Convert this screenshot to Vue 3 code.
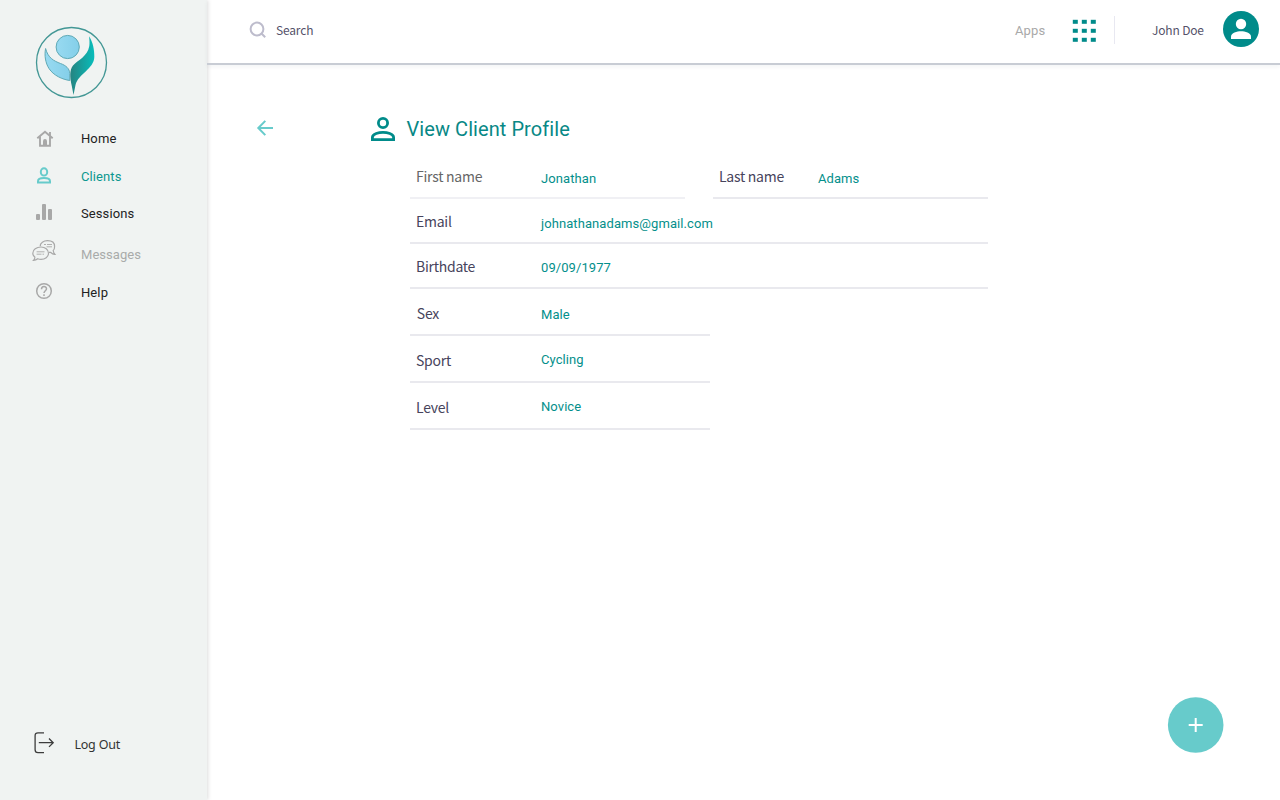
<script setup>
const nav = [
  { id: 'home', label: 'Home' },
  { id: 'clients', label: 'Clients' },
  { id: 'sessions', label: 'Sessions' },
  { id: 'messages', label: 'Messages' },
  { id: 'help', label: 'Help' }
]
const rows = [
  { id: 'email', label: 'Email', value: 'johnathanadams@gmail.com' },
  { id: 'birthdate', label: 'Birthdate', value: '09/09/1977' },
  { id: 'sex', label: 'Sex', value: 'Male' },
  { id: 'sport', label: 'Sport', value: 'Cycling' },
  { id: 'level', label: 'Level', value: 'Novice' }
]
</script>

<template>
  <div class="app">
    <aside class="sidebar">
      <svg class="logo" viewBox="0 0 72 72">
        <defs>
          <linearGradient id="leaf" x1="0" x2="1" y1="0" y2="0">
            <stop offset="0" stop-color="#258481" />
            <stop offset="1" stop-color="#08bdbb" />
          </linearGradient>
          <linearGradient id="sky" x1="0" x2="1" y1="0" y2="0">
            <stop offset="0" stop-color="#98daf1" />
            <stop offset="1" stop-color="#84cfe9" />
          </linearGradient>
        </defs>
        <circle cx="36.500" cy="36.500" r="35" fill="none" stroke="#439795" stroke-width="1.300" />
        <circle cx="32.700" cy="21" r="11.600" fill="url(#sky)" stroke="#5fa9b5" stroke-width="1" />
        <path d="M10.600 22.500C13 32 19 35 25.500 37.500C31 39.500 34.500 42.500 34.800 47.500V54.500C27.500 53.500 18.500 49.500 14 42.500C10.500 37 9.200 29.500 10.600 22.500Z" fill="url(#sky)" stroke="#5fa9b5" stroke-width="1" />
        <path d="M54 10.200C58 16 59.500 24 59.300 31C59 43 43 48 40.500 59L38.500 69L36.800 60C34.800 51 34.500 44 38 39.500C43 34 52.500 30.500 54.300 20C54.700 17 54.500 13.500 54 10.200Z" fill="url(#leaf)" />
      </svg>

      <nav class="nav">
        <a v-for="n in nav" :key="n.id" class="item" :class="n.id">
          <svg v-if="n.id === 'home'" class="icon" viewBox="0 0 24 24" fill="none" stroke="#a8a8a8" stroke-width="1.900">
            <path d="M4.300 11.300L12 4.700L19.700 11.300M7 9.800V18.700H17V9.800M17 8.500V5" />
            <path d="M10 18.700V14.300Q10 12 12 12T14 14.300V18.700Z" fill="#a8a8a8" stroke="none" />
          </svg>
          <svg v-else-if="n.id === 'clients'" class="icon" viewBox="0 0 24 24" fill="none" stroke="#67cbcb" stroke-width="2">
            <ellipse cx="11" cy="6.900" rx="3.200" ry="3.700" />
            <path d="M5 17.500V16.300C5 13.700 8.500 13.100 11 13.100S17 13.700 17 16.300V17.500Z" />
          </svg>
          <svg v-else-if="n.id === 'sessions'" class="icon" viewBox="0 0 24 24" fill="#a8a8a8">
            <rect x="3" y="12" width="4" height="6" rx="1" /><rect x="9" y="2" width="4" height="16" rx="1" /><rect x="15" y="7" width="4" height="11" rx="1" />
          </svg>
          <svg v-else-if="n.id === 'messages'" class="icon" viewBox="0 0 24 24" fill="none" stroke="#a9a9a9" stroke-width="1.200">
            <path d="M8.200 7.300C8.200 3.800 11.500 1.700 15.500 1.700C20 1.700 22.600 4 22.600 7.500C22.600 9.500 22 11 21.200 11.500C21.400 13.200 22.200 14.500 23 15.300C21.500 15.500 20 14.700 18.500 13.300H17" />
            <path d="M9 8C13 8 16.500 10.500 16.500 14.200C16.500 18 13 20.300 9 20.300C7.500 20.300 6.500 20 5.700 19.700C4.500 20.800 3 21.300 1.500 21.300C2.500 20.300 3 19.300 2.800 18C1.500 17 .8 15.800 .8 14.200C.8 10.500 4.500 8 9 8Z" />
            <path d="M12 5.500H14M15 5.500H20M14.500 7.800H20M4.600 12.800H12.500M4.600 15.200H9.500M10.500 15.200H12" stroke-width=".9" />
          </svg>
          <svg v-else class="icon" viewBox="0 0 24 24" fill="none" stroke="#a8a8a8" stroke-width="1.500">
            <circle cx="11" cy="11" r="7.300" />
            <path d="M8.500 9.300C8.500 5.700 13.500 5.800 13.500 8.800C13.500 10.800 11 10.800 11 13.100M11 14.200V15.900" />
          </svg>
          <span>{{ n.label }}</span>
        </a>
      </nav>

      <a class="logout">
        <svg viewBox="0 0 22 22" fill="none" stroke="#3c3c3c" stroke-width="1.300">
          <path d="M11 .8H5Q2.100 .8 2.100 3.700V17.700Q2.100 20.600 5 20.600H11" />
          <path d="M5.800 10.700H20.200M16 6.500L20.200 10.700L16 14.900" />
        </svg>
        <span>Log Out</span>
      </a>
    </aside>

    <div class="content">
      <header class="topbar">
        <svg class="search-icon" viewBox="0 0 18 18" fill="none" stroke="#bdbccc" stroke-width="2">
          <circle cx="8" cy="8" r="6.400" /><path d="M12.500 12.500L16.200 16.200" />
        </svg>
        <span class="search">Search</span>
        <span class="apps">Apps</span>
        <svg class="grid-icon" viewBox="0 0 24 24" fill="#008b8a">
          <template v-for="y in 3" :key="y">
            <rect v-for="x in 3" :key="x" :x="(x - 1) * 9 - .2" :y="(y - 1) * 9 + .8" width="5" height="4" />
          </template>
        </svg>
        <i class="divider"></i>
        <span class="user">John Doe</span>
        <svg class="avatar" viewBox="0 0 36 36">
          <circle cx="18" cy="18" r="18" fill="#008b8a" />
          <circle cx="18" cy="13" r="5.200" fill="#fff" />
          <path d="M8 28V25.500C8 22 14 20.300 18 20.300S28 22 28 25.500V28Z" fill="#fff" />
        </svg>
      </header>

      <main class="main">
        <svg class="back" viewBox="0 0 16 16" fill="none" stroke="#67cbcb" stroke-width="2">
          <path d="M16 8H1.600M8.300 .9L1.300 8L8.300 15.100" />
        </svg>
        <section class="profile">
          <h1 class="title">
            <svg viewBox="0 0 24 24" fill="none" stroke="#008b8a" stroke-width="2.800">
              <circle cx="12" cy="6" r="4.600" />
              <path d="M1.400 22.600V20.400C1.400 16.800 8 15.400 12 15.400S22.600 16.800 22.600 20.400V22.600Z" />
            </svg>
            <span>View Client Profile</span>
          </h1>
          <div class="fields">
            <div class="pair">
              <div class="row first"><span class="label">First name</span><span class="value">Jonathan</span></div>
              <div class="row last"><span class="label">Last name</span><span class="value">Adams</span></div>
            </div>
            <div v-for="r in rows" :key="r.id" class="row" :class="r.id">
              <span class="label">{{ r.label }}</span><span class="value">{{ r.value }}</span>
            </div>
          </div>
        </section>
        <button class="add" aria-label="Add">
          <svg viewBox="0 0 56 56">
            <circle cx="27.700" cy="28" r="27.800" fill="#67cbcb" />
            <path d="M27.700 21V35M20.700 28H34.700" stroke="#fff" stroke-width="2" />
          </svg>
        </button>
      </main>
    </div>
  </div>
</template>

<style>
body { background: #fff; overflow: hidden; }
</style>

<style scoped>
.app { display: flex; width: 1280px; height: 800px; font-family: Roboto, sans-serif; overflow: hidden; }
svg { display: block; flex: none; overflow: visible; }
.sidebar { width: 207px; box-sizing: border-box; background: #f0f3f2; display: flex; flex-direction: column; padding: 26px 0 44px; box-shadow: 1px 0 4px rgba(0, 0, 0, .14); }
.logo { width: 72px; height: 72px; margin-left: 35px; }
.nav { display: flex; flex-direction: column; margin-top: 29px; }
.item { display: flex; align-items: center; height: 24px; margin-bottom: 14px; padding-left: 33px; gap: 24px; font-size: 13px; line-height: 24px; letter-spacing: .1px; color: #222; }
.icon { width: 24px; height: 24px; }
.home .icon { margin-top: -1px; }
.clients { color: #0c9890; margin-bottom: 13px; }
.sessions { margin-bottom: 17px; }
.messages { color: #a9abaa; letter-spacing: .05px; }
.messages .icon { margin: -8px 1px 0 -1px; }
.help .icon { margin-top: -2px; }
.logout { display: flex; align-items: center; margin-top: auto; padding-left: 33px; gap: 19px; font: 12.5px/22px "Noto Sans", sans-serif; letter-spacing: -.2px; color: #333; }
.logout svg { width: 22px; height: 22px; }
.logout span { padding: 4px 0 0 .4px; }
.content { flex: 1; display: flex; flex-direction: column; }
.topbar { height: 63px; display: flex; align-items: center; padding: 0 21px 0 42px; border-bottom: 2px solid #c8ccd4; box-shadow: 0 2px 4px rgba(0, 40, 60, .05); box-sizing: content-box; }
.search-icon { width: 18px; height: 18px; margin-top: -3px; }
.search, .user { font: 12px/20px "Noto Sans CJK JP", sans-serif; letter-spacing: -.17px; color: #55526a; margin-top: -3px; white-space: nowrap; }
.search { margin-left: 9px; }
.apps { margin-left: auto; margin-top: -2px; width: 58px; font-size: 13px; letter-spacing: .12px; color: #a9a9a9; }
.grid-icon { width: 24px; height: 24px; margin-top: -2px; }
.divider { width: 1px; height: 28px; background: #e8e8f1; margin: -3px 37px 0 17px; }
.user { width: 71px; }
.avatar { width: 36px; height: 36px; margin-top: -5px; }
.main { position: relative; flex: 1; display: flex; padding: 50px 0 0 50px; }
.back { width: 16px; height: 16px; margin-top: 5px; }
.profile { margin-left: 98px; width: 617px; }
.title { display: flex; align-items: center; gap: 11.5px; height: 26px; margin: 1px 0 0; font-size: 20px; line-height: 26px; font-weight: 400; letter-spacing: .07px; color: #088886; }
.title svg { width: 24px; height: 24px; }
.fields { margin-left: 39px; padding-top: 12px; }
.pair { display: flex; justify-content: space-between; }
.row { display: flex; align-items: flex-end; box-sizing: border-box; width: 578px; height: 45px; border-bottom: 2px solid #e9e9ee; padding-left: 6px; }
.pair .row { width: 275px; }
.pair .first { border-color: #f0f0f4; }
.sex, .sport, .level { width: 300px; height: 47px; }
.label { width: 125px; flex: none; font: 14px/20px "Noto Sans CJK JP", sans-serif; letter-spacing: -.26px; color: #47445c; margin-bottom: 11px; }
.first .label { color: #666; }
.last .label { width: 99px; }
.sex .label { text-indent: .8px; }
.value { font-size: 13px; line-height: 20px; letter-spacing: .08px; color: #048f8b; margin-bottom: 8px; white-space: nowrap; }
.birthdate .value, .sex .value { margin-bottom: 9px; }
.sport .value, .level .value { margin-bottom: 11px; }
.add { position: absolute; right: 56px; bottom: 47px; width: 56px; height: 56px; border: 0; padding: 0; background: none; }
.add svg { width: 56px; height: 56px; }
</style>
